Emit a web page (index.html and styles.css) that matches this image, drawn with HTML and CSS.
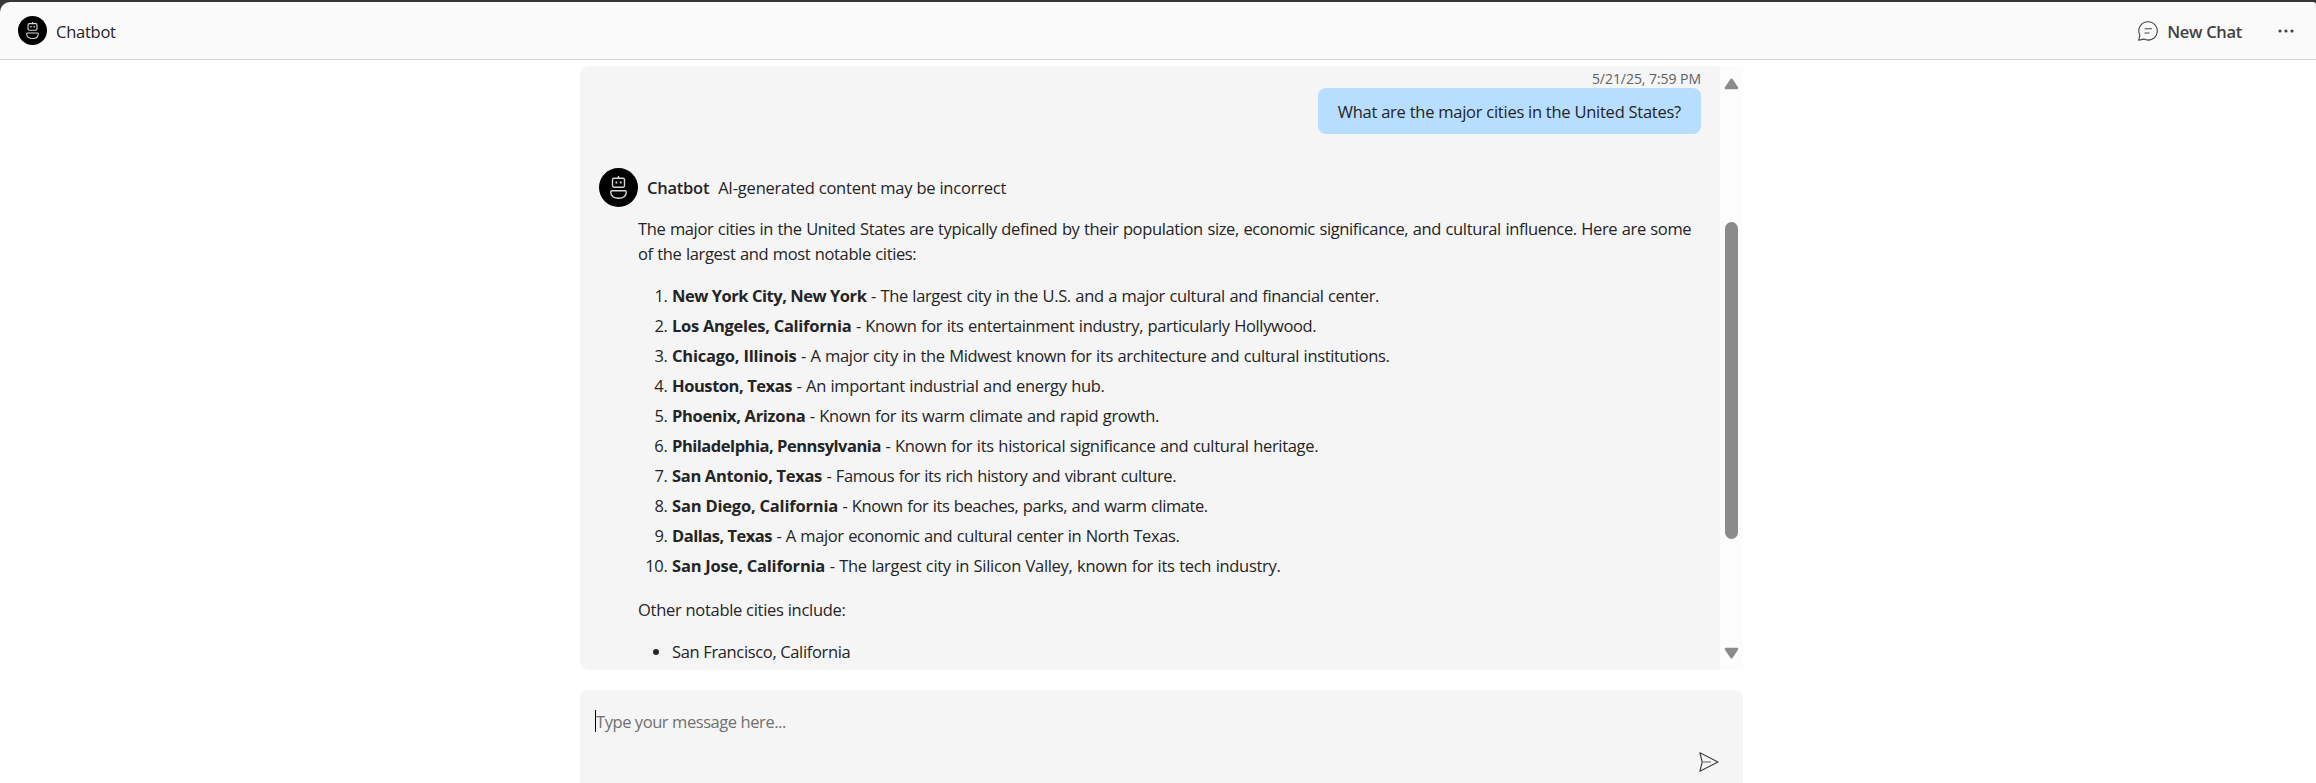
FILE: index.html
```
<!DOCTYPE html>
<html lang="en">
<head>
<meta charset="utf-8">
<title>Chatbot</title>
<link rel="stylesheet" href="styles.css">
</head>
<body>
<div class="app">
  <header class="header">
    <div class="brand">
      <span class="avatar avatar-small">
        <svg viewBox="0 0 39 39" fill="none" stroke="#d8d8d8" stroke-width="1.5"><path d="M19.500 8v2"/><rect x="13.500" y="10.200" width="12" height="9" rx="1.600"/><path d="M16.500 14.600h1.800M20.800 14.600h1.800" stroke-width="2"/><path d="M13 22.800h13a1.200 1.200 0 0 1 1.300 1.300c0 4-3.300 6.200-7.800 6.200s-7.800-2.200-7.800-6.200a1.200 1.200 0 0 1 1.300-1.300z"/></svg>
      </span>
      <span class="brand-name">Chatbot</span>
    </div>
    <div class="actions">
      <button class="new-chat">
        <svg class="icon" viewBox="0 0 20 20" fill="none" stroke="#424242" stroke-width="1.1" stroke-linecap="round" stroke-linejoin="round"><path d="M10.200.7a9.200 9.200 0 1 1-4.300 17.400L.7 19.300 1.900 14.200A9.200 9.200 0 0 1 10.200.7z"/><path d="M7 7.700h6.500M7 12h4"/></svg>
        <span class="new-chat-label">New Chat</span>
      </button>
      <svg class="more" viewBox="0 0 16 4" fill="#424242"><circle cx="2" cy="2" r="1.600"/><circle cx="8" cy="2" r="1.600"/><circle cx="14" cy="2" r="1.600"/></svg>
    </div>
  </header>
  <main class="main">
    <section class="chat">
      <div class="messages">
        <div class="user">
          <time class="time">5/21/25, 7:59 PM</time>
          <div class="bubble">What are the major cities in the United States?</div>
        </div>
        <div class="bot-head">
          <span class="avatar">
            <svg viewBox="0 0 39 39" fill="none" stroke="#d8d8d8" stroke-width="1.400"><path d="M19.500 8v2"/><rect x="13.500" y="10.200" width="12" height="9" rx="1.600"/><path d="M16.500 14.600h1.800M20.800 14.600h1.800" stroke-width="2"/><path d="M13 22.800h13a1.200 1.200 0 0 1 1.300 1.300c0 4-3.300 6.200-7.800 6.200s-7.800-2.200-7.800-6.200a1.200 1.200 0 0 1 1.300-1.300z"/></svg>
          </span>
          <span class="bot-name">Chatbot</span>
          <span class="note">AI-generated content may be incorrect</span>
        </div>
        <div class="answer">
          <p class="intro">The major cities in the United States are typically defined by their population size, economic significance, and cultural influence. Here are some of the largest and most notable cities:</p>
          <ol class="cities">
            <li><b>New York City, New York</b> - The largest city in the U.S. and a major cultural and financial center.</li>
            <li><b>Los Angeles, California</b> - Known for its entertainment industry, particularly Hollywood.</li>
            <li><b>Chicago, Illinois</b> - A major city in the Midwest known for its architecture and cultural institutions.</li>
            <li><b>Houston, Texas</b> - An important industrial and energy hub.</li>
            <li><b>Phoenix, Arizona</b> - Known for its warm climate and rapid growth.</li>
            <li><b>Philadelphia, Pennsylvania</b> - Known for its historical significance and cultural heritage.</li>
            <li><b>San Antonio, Texas</b> - Famous for its rich history and vibrant culture.</li>
            <li><b>San Diego, California</b> - Known for its beaches, parks, and warm climate.</li>
            <li><b>Dallas, Texas</b> - A major economic and cultural center in North Texas.</li>
            <li><b>San Jose, California</b> - The largest city in Silicon Valley, known for its tech industry.</li>
          </ol>
          <p class="other">Other notable cities include:</p>
          <ul class="more-cities"><li>San Francisco, California</li></ul>
        </div>
      </div>
      <div class="scrollbar">
        <svg class="arrow" viewBox="0 0 15 12"><path d="M7.500 1.800l5.500 8.200h-11z" fill="#8b8b8b" stroke="#8b8b8b" stroke-width="2.500" stroke-linejoin="round"/></svg>
        <div class="thumb"></div>
        <svg class="arrow down" viewBox="0 0 15 12"><path d="M7.500 10.200l5.500-8.200h-11z" fill="#8b8b8b" stroke="#8b8b8b" stroke-width="2.500" stroke-linejoin="round"/></svg>
      </div>
    </section>
    <section class="composer">
      <div class="field"><span class="caret"></span><span class="placeholder">Type your message here...</span></div>
      <svg class="send" viewBox="0 0 20 20" fill="none" stroke="#424242" stroke-width="1.200" stroke-linejoin="round"><path d="M.9.800L19 10 .9 19.200 3.200 10z"/><path d="M3.200 10h8.800" stroke="#777"/></svg>
    </section>
  </main>
</div>
</body>
</html>
```
FILE: styles.css
```
* { box-sizing: border-box; }
body { margin: 0; background: #383636; color: #242424; font: 16.5px/25px "Open Sans", "Noto Sans", sans-serif; letter-spacing: -0.25px; overflow: hidden; }
.app { height: 783px; padding-top: 2px; }
.header { height: 58px; display: flex; justify-content: space-between; align-items: center; padding: 0 22px 0 18px; background: #fafafa; border-bottom: 1px solid #d1d1d1; border-radius: 10px 3px 0 0; }
.brand, .actions, .new-chat { display: flex; align-items: center; }
.brand { gap: 9px; }
.brand-name, .new-chat-label { padding-top: 1px; }
.avatar { display: flex; width: 39px; height: 39px; border-radius: 50%; background: #000; }
.avatar-small { width: 29px; height: 29px; }
.avatar svg { width: 100%; height: 100%; }
.new-chat { gap: 9px; padding: 0; border: 0; background: none; color: #424242; font: inherit; }
.new-chat-label { font-weight: 600; letter-spacing: -0.3px; }
.icon { width: 20px; height: 20px; }
.more { width: 16px; height: 4px; margin-left: 36px; }
.main { height: 723px; padding: 6px 573px 0 580px; background: #fff; display: flex; flex-direction: column; gap: 20px; }
.chat { height: 604px; display: flex; background: #f5f5f5; border-radius: 9px 0 0 9px; overflow: hidden; }
.messages { flex: 1; min-width: 0; padding: 0 19px; }
.user { display: flex; flex-direction: column; align-items: flex-end; }
.time { height: 22px; line-height: 26px; font-size: 14px; letter-spacing: -0.05px; color: #616161; }
.bubble { height: 46px; padding: 11px 20px 10px; border-radius: 8px; background: #b8deff; }
.bot-head { display: flex; align-items: center; margin-top: 34px; }
.bot-name { margin-left: 9px; font-weight: 600; }
.note { margin-left: 9px; letter-spacing: -0.22px; }
.answer { padding: 9px 0 0 39px; }
.intro, .other { margin: 0; }
.intro { letter-spacing: -0.37px; word-spacing: 0.62px; }
.cities, .more-cities { margin: 17px 0 0; padding-left: 34px; display: flex; flex-direction: column; gap: 5px; }
.cities { word-spacing: 0.6px; }
.cities li { letter-spacing: -0.36px; }
.cities b { word-spacing: 0; letter-spacing: -0.33px; }
.cities li:nth-child(1) b { letter-spacing: -0.46px; }
.cities li:nth-child(2) { letter-spacing: -0.37px; }
.cities li:nth-child(2) b { letter-spacing: -0.28px; }
.cities li:nth-child(3) b { letter-spacing: -0.22px; }
.cities li:nth-child(4) { letter-spacing: -0.33px; }
.cities li:nth-child(4) b { letter-spacing: -0.44px; }
.cities li:nth-child(6) { letter-spacing: -0.32px; }
.cities li:nth-child(6) b { letter-spacing: -0.48px; }
.cities li:nth-child(7) { letter-spacing: -0.4px; }
.cities li:nth-child(8) { letter-spacing: -0.42px; }
.cities li:nth-child(8) b { letter-spacing: -0.2px; }
.cities li:nth-child(9) { letter-spacing: -0.39px; }
.cities li:nth-child(9) b { letter-spacing: -0.5px; }
.cities li:nth-child(10) { letter-spacing: -0.31px; }
.cities li:nth-child(10) b { letter-spacing: -0.21px; }
.more-cities { letter-spacing: -0.35px; }
.other { margin-top: 19px; letter-spacing: -0.28px; }
.scrollbar { flex: 0 0 23px; background: #fcfcfc; display: flex; flex-direction: column; align-items: center; padding: 12px 0 11px; }
.arrow { width: 15px; height: 12px; }
.thumb { width: 13px; height: 317px; margin-top: 132px; border-radius: 7px; background: #8b8b8b; }
.down { margin-top: auto; }
.composer { flex: 1; display: flex; justify-content: space-between; background: #f5f5f5; border-radius: 8px 8px 0 0; padding: 20px 24px 0 15px; }
.field { display: flex; height: 22px; }
.caret { width: 1px; height: 22px; background: #000; }
.placeholder { color: #707070; line-height: 24px; letter-spacing: -0.43px; }
.send { width: 20px; height: 20px; margin-top: 42px; }
```
